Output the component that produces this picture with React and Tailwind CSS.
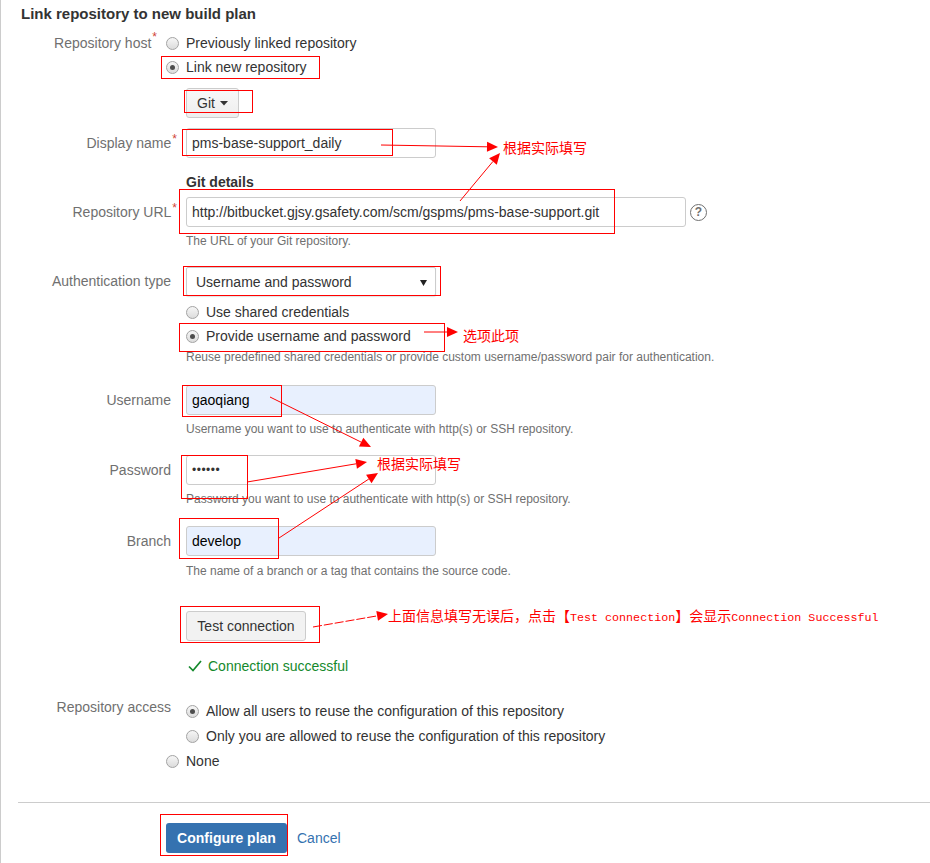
import React from 'react';

const RED = '#ff0000';

// little round radio like the old chrome style
const Radio = ({ checked }) => (
  <span className="flex h-[13px] w-[13px] shrink-0 items-center justify-center rounded-full border border-[#a3a3a3] bg-gradient-to-b from-[#f6f6f6] to-[#dcdcdc]">
    {checked && <span className="h-[5px] w-[5px] rounded-full bg-[#4d4d4d]" />}
  </span>
);

const RadioLine = ({ checked, children, className = '' }) => (
  <div className={`flex items-center gap-[7px] ${className}`}>
    <Radio checked={checked} />
    <span className="text-[#333]">{children}</span>
  </div>
);

const Label = ({ children, req, w = 'w-[170px]' }) => (
  <div className={`${w} shrink-0 text-right text-[#707070]`}>
    {children}
    {req && <span className="-mr-[6px] ml-[1px] align-top text-[12px] leading-none text-[#d04437]">*</span>}
  </div>
);

const Help = ({ children, className = '' }) => (
  <div className={`pl-[185px] text-[12px] leading-[16px] text-[#707070] ${className}`}>{children}</div>
);

const TextBox = ({ value, blue, w = 'w-[250px]' }) => (
  <div className={`ml-[15px] flex h-[30px] ${w} items-center rounded-[3px] border border-[#cccccc] pl-[5px] ${blue ? 'bg-[#e8f0fe] text-black' : 'bg-white text-[#333]'}`}>
    {value}
  </div>
);

const Arrow = ({ x1, y1, x2, y2, dash }) => {
  const a = Math.atan2(y2 - y1, x2 - x1);
  const L = 11;
  const W = 5;
  const bx = x2 - L * Math.cos(a);
  const by = y2 - L * Math.sin(a);
  const pts = [
    [x2, y2],
    [bx + W * Math.sin(a), by - W * Math.cos(a)],
    [bx - W * Math.sin(a), by + W * Math.cos(a)],
  ]
    .map(p => p.join(','))
    .join(' ');
  return (
    <g>
      <line x1={x1} y1={y1} x2={bx} y2={by} stroke={RED} strokeWidth="1" strokeDasharray={dash ? '9 2' : undefined} />
      <polygon points={pts} fill={RED} />
    </g>
  );
};

const boxes = [
  [161.5, 56.5, 158, 22],
  [184.5, 90.5, 68, 22],
  [182.5, 129.5, 210, 26],
  [179.5, 189.5, 435, 44],
  [183.5, 266.5, 257, 29],
  [179.5, 323.5, 265, 28],
  [182.5, 385.5, 99, 31],
  [181.5, 455.5, 66, 43],
  [179.5, 518.5, 99, 40],
  [180.5, 606.5, 139, 36],
  [160.5, 814.5, 127, 41],
];

export default function App() {
  return (
    <div className="relative h-[863px] w-[930px] overflow-hidden border-l border-[#cccccc] bg-white font-['Liberation_Sans',Arial,sans-serif] text-[14px] text-[#333]">
      <h2 className="pl-[20px] pt-[5px] text-[15px] font-bold leading-[18px] text-[#333]">
        Link repository to new build plan
      </h2>

      {/* repository host */}
      <div className="mt-[8px] flex">
        <div className="w-[150px] shrink-0 text-right leading-[24px] text-[#707070]">
          Repository host
          <span className="-mr-[6px] ml-[1px] align-top text-[12px] leading-none text-[#d04437]">*</span>
        </div>
        <div className="ml-[15px]">
          <RadioLine className="h-[24px]">Previously linked repository</RadioLine>
          <RadioLine checked className="h-[24px]">Link new repository</RadioLine>
        </div>
      </div>

      <div className="mt-[9px] pl-[185px]">
        <div className="flex h-[30px] w-[53px] items-center rounded-[3px] border border-[#cccccc] bg-gradient-to-b from-[#f8f8f8] to-[#eeeeee] pl-[10px]">
          Git
          <svg width="8" height="5" className="ml-[5px]" viewBox="0 0 8 5">
            <polygon points="0,0 8,0 4,4.5" fill="#333" />
          </svg>
        </div>
      </div>

      <div className="mt-[10px] flex items-center">
        <Label req>Display name</Label>
        <TextBox value="pms-base-support_daily" />
      </div>

      <div className="mt-[16px] pl-[185px] font-bold leading-[17px]">Git details</div>

      <div className="mt-[6px] flex items-center">
        <Label req>Repository URL</Label>
        <TextBox w="w-[500px]" value="http://bitbucket.gjsy.gsafety.com/scm/gspms/pms-base-support.git" />
        <span className="ml-[4px] flex h-[17px] w-[17px] items-center justify-center rounded-full border-[1.5px] border-[#707070] text-[12px] font-bold leading-none text-[#707070]">
          ?
        </span>
      </div>
      <Help className="mt-[6px]">The URL of your Git repository.</Help>

      <div className="mt-[18px] flex items-center">
        <Label>Authentication type</Label>
        <div className="ml-[15px] flex h-[29px] w-[250px] items-center justify-between rounded-[2px] border border-[#cccccc] bg-white pl-[9px] pr-[8px] pt-[2px] shadow-[0_1px_1px_rgba(0,0,0,0.12)]">
          <span>Username and password</span>
          <svg width="7" height="6" viewBox="0 0 7 6">
            <polygon points="0,0 7,0 3.5,6" fill="#222" />
          </svg>
        </div>
      </div>
      <div className="mt-[4px] pl-[185px]">
        <RadioLine className="h-[24px]">Use shared credentials</RadioLine>
        <RadioLine checked className="h-[25px]">Provide username and password</RadioLine>
      </div>
      <Help>Reuse predefined shared credentials or provide custom username/password pair for authentication.</Help>

      <div className="mt-[20px] flex items-center">
        <Label>Username</Label>
        <TextBox blue value="gaoqiang" />
      </div>
      <Help className="mt-[6px]">Username you want to use to authenticate with http(s) or SSH repository.</Help>

      <div className="mt-[18px] flex items-center">
        <Label>Password</Label>
        <TextBox value={<span className="text-[12px] tracking-[0.5px] text-[#333]">••••••</span>} />
      </div>
      <Help className="mt-[6px]">Password you want to use to authenticate with http(s) or SSH repository.</Help>

      <div className="mt-[19px] flex items-center">
        <Label>Branch</Label>
        <TextBox blue value="develop" />
      </div>
      <Help className="mt-[7px]">The name of a branch or a tag that contains the source code.</Help>

      <div className="mt-[32px] pl-[185px]">
        <div className="flex h-[30px] w-[120px] items-center justify-center rounded-[3px] border border-[#cccccc] bg-[#f2f2f2]">
          Test connection
        </div>
      </div>

      <div className="mt-[16px] flex items-center pl-[187px] leading-[18px] text-[#14892c]">
        <svg width="14" height="12" viewBox="0 0 14 12" className="mr-[6px]">
          <polyline points="1,6.5 5,10.5 13,1" fill="none" stroke="#14892c" strokeWidth="1.7" />
        </svg>
        Connection successful
      </div>

      <div className="mt-[24px] flex">
        <div className="w-[170px] shrink-0 text-right leading-[16px] text-[#707070]">Repository access</div>
        <div className="ml-[15px]">
          <RadioLine checked className="h-[25px]">Allow all users to reuse the configuration of this repository</RadioLine>
          <RadioLine className="h-[25px]">Only you are allowed to reuse the configuration of this repository</RadioLine>
        </div>
      </div>
      <div className="pl-[165px]">
        <RadioLine className="h-[25px]">None</RadioLine>
      </div>

      <div className="ml-[17px] mt-[28px] border-t border-[#cccccc]" />

      <div className="mt-[20px] flex items-center pl-[165px]">
        <div className="flex h-[30px] w-[121px] items-center justify-center rounded-[3px] bg-[#3572b0] font-bold text-white">
          Configure plan
        </div>
        <span className="ml-[10px] text-[#3572b0]">Cancel</span>
      </div>

      {/* annotation layer */}
      <svg className="pointer-events-none absolute -left-px top-0" width="930" height="863" viewBox="0 0 930 863">
        {boxes.map(([x, y, w, h], i) => (
          <rect key={i} x={x} y={y} width={w} height={h} fill="none" stroke={RED} strokeWidth="1" />
        ))}
        <Arrow x1={381} y1={145} x2={498} y2={147} />
        <Arrow x1={460} y1={201} x2={500} y2={153} />
        <Arrow x1={424} y1={332} x2={458} y2={332} />
        <Arrow x1={270} y1={397} x2={371} y2={447} />
        <Arrow x1={247} y1={482} x2={367} y2={462} />
        <Arrow x1={279} y1={538} x2={378} y2={473} />
        <Arrow x1={313} y1={627} x2={388} y2={614} dash />
      </svg>

      <div className="pointer-events-none absolute left-[502px] top-[137px] font-['Noto_Sans_CJK_SC',sans-serif] text-[14px] leading-[20px] text-[#ff0000]">
        根据实际填写
      </div>
      <div className="pointer-events-none absolute left-[462px] top-[325px] font-['Noto_Sans_CJK_SC',sans-serif] text-[14px] leading-[20px] text-[#ff0000]">
        选项此项
      </div>
      <div className="pointer-events-none absolute left-[376px] top-[453px] font-['Noto_Sans_CJK_SC',sans-serif] text-[14px] leading-[20px] text-[#ff0000]">
        根据实际填写
      </div>
      <div className="pointer-events-none absolute left-[387px] top-[605px] whitespace-nowrap font-['Noto_Sans_CJK_SC',sans-serif] text-[14px] leading-[20px] text-[#ff0000]">
        上面信息填写无误后，点击【
        <span className="font-['Liberation_Mono',monospace] text-[11.7px]">Test connection</span>
        】会显示
        <span className="font-['Liberation_Mono',monospace] text-[11.7px]">Connection Successful</span>
      </div>
    </div>
  );
}
